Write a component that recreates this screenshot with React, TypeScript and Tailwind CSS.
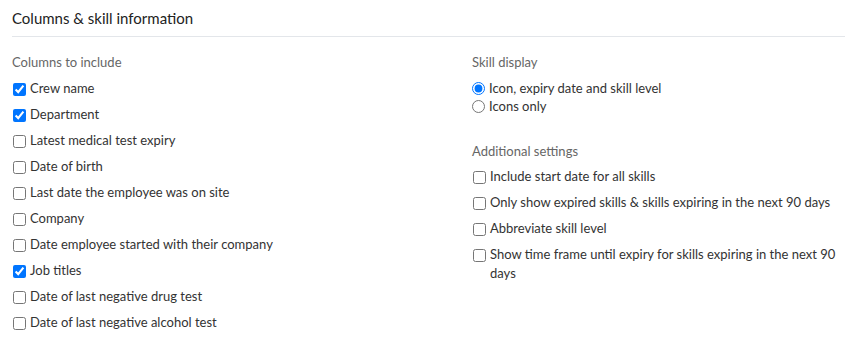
import { useState } from "react";

const columns = [
  { label: "Crew name", checked: true },
  { label: "Department", checked: true },
  { label: "Latest medical test expiry", checked: false },
  { label: "Date of birth", checked: false },
  { label: "Last date the employee was on site", checked: false },
  { label: "Company", checked: false },
  { label: "Date employee started with their company", checked: false },
  { label: "Job titles", checked: true },
  { label: "Date of last negative drug test", checked: false },
  { label: "Date of last negative alcohol test", checked: false },
];

const additional = [
  "Include start date for all skills",
  "Only show expired skills & skills expiring in the next 90 days",
  "Abbreviate skill level",
  "Show time frame until expiry for skills expiring in the next 90 days",
];

function CheckRow({ label, checked }: { label: string; checked: boolean }) {
  return (
    <label className="flex items-start gap-[4px] text-[13px] leading-[19px] text-[#333]">
      <input type="checkbox" defaultChecked={checked} className="mt-[4px] ml-[1px] h-[13px] w-[13px] shrink-0" />
      <span>{label}</span>
    </label>
  );
}

export default function App() {
  const [display, setDisplay] = useState("full");

  return (
    <div className="bg-white pl-3 pt-[8px] font-['Lato','Open_Sans',sans-serif]">
      <h2 className="text-[15px] leading-5 text-[#222]">Columns &amp; skill information</h2>
      <div className="mt-[8px] border-t border-[#e3e6ea]" />
      <div className="flex pt-[15px]">
        <div className="w-[460px]">
          <div className="text-[13px] leading-5 text-[#666]">Columns to include</div>
          <div className="mt-[7px] flex flex-col gap-[7px]">
            {columns.map((c) => (
              <CheckRow key={c.label} label={c.label} checked={c.checked} />
            ))}
          </div>
        </div>
        <div className="w-[365px]">
          <div className="text-[13px] leading-5 text-[#666]">Skill display</div>
          <div className="mt-[7px] flex flex-col">
            <label className="flex items-start gap-[4px] text-[13px] leading-[18px] text-[#333]">
              <input
                type="radio"
                name="display"
                checked={display === "full"}
                onChange={() => setDisplay("full")}
                className="mt-[3px] h-[13px] w-[13px]"
              />
              <span>Icon, expiry date and skill level</span>
            </label>
            <label className="flex items-start gap-[4px] text-[13px] leading-[18px] text-[#333]">
              <input
                type="radio"
                name="display"
                checked={display === "icons"}
                onChange={() => setDisplay("icons")}
                className="mt-[3px] h-[13px] w-[13px]"
              />
              <span>Icons only</span>
            </label>
          </div>
          <div className="mt-[26px] text-[13px] leading-5 text-[#666]">Additional settings</div>
          <div className="mt-[6px] flex flex-col gap-[7px]">
            {additional.map((a) => (
              <CheckRow key={a} label={a} checked={false} />
            ))}
          </div>
        </div>
      </div>
    </div>
  );
}
